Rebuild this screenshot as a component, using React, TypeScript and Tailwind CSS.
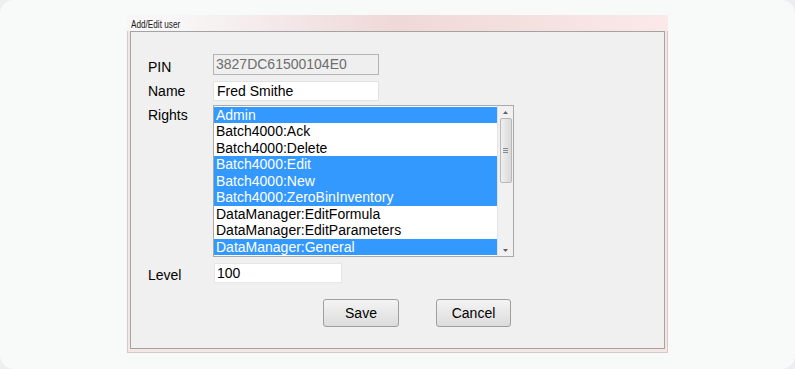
const rights = [
  { name: "Admin", selected: true },
  { name: "Batch4000:Ack", selected: false },
  { name: "Batch4000:Delete", selected: false },
  { name: "Batch4000:Edit", selected: true },
  { name: "Batch4000:New", selected: true },
  { name: "Batch4000:ZeroBinInventory", selected: true },
  { name: "DataManager:EditFormula", selected: false },
  { name: "DataManager:EditParameters", selected: false },
  { name: "DataManager:General", selected: true },
];

function Scrollbar() {
  return (
    <div className="flex h-full w-[16px] flex-col items-center border-l border-[#e3e3e3] bg-[#f1f1f1]">
      <div className="flex h-[12px] w-full items-center justify-center">
        <svg width="5" height="3" viewBox="0 0 5 3">
          <path d="M0 3 L2.5 0 L5 3 Z" fill="#606060" />
        </svg>
      </div>
      <div className="flex h-[65px] w-[12px] flex-col items-center justify-center gap-[1px] rounded-[2px] border border-[#b8b8b8] bg-gradient-to-r from-[#f0f0f0] to-[#d9d9d9]">
        <div className="h-px w-[5px] bg-[#8a8a8a]" />
        <div className="h-px w-[5px] bg-[#8a8a8a]" />
        <div className="h-px w-[5px] bg-[#8a8a8a]" />
      </div>
      <div className="flex-1" />
      <div className="flex h-[12px] w-full items-center justify-center">
        <svg width="5" height="3" viewBox="0 0 5 3">
          <path d="M0 0 L2.5 3 L5 0 Z" fill="#606060" />
        </svg>
      </div>
    </div>
  );
}

export default function App() {
  return (
    <div className="h-[369px] w-[795px] bg-[#eceef0] font-['Liberation_Sans',Arial,sans-serif]">
      <div className="h-full w-full overflow-hidden rounded-[14px] bg-[#f8f9f9] pl-[127px] pt-[15px]">
        <div className="flex w-[541px] flex-col">
          {/* title bar */}
          <div className="flex h-[16px] items-end bg-gradient-to-r from-[#f8f6f6] from-10% via-[#efd8d8] to-[#fbe9e9] pb-[2px] pl-[4px]">
            <span className="origin-left scale-x-[0.78] text-[10.5px] leading-none text-[#1a1a1a]">
              Add/Edit user
            </span>
          </div>
          {/* frame */}
          <div className="border-x border-b border-[#d9c6c6] bg-[#f6e7e7] px-[2px] pb-[3px]">
            <div className="h-[318px] border border-[#a3a3a3] bg-[#f0f0f0] pl-[17px] pt-[22px] text-[14px] text-black">
              <div className="flex h-[21px] items-center">
                <span className="w-[65px] pt-[5px]">PIN</span>
                <div className="flex h-[21px] w-[166px] items-center border border-[#b5b5b5] bg-[#efefef] pl-[2px] text-[#6d6d6d]">
                  3827DC61500104E0
                </div>
              </div>
              <div className="mt-[6px] flex h-[20px] items-center">
                <span className="w-[65px]">Name</span>
                <div className="flex h-[20px] w-[166px] items-center border border-[#e2e2e2] bg-white pl-[3px]">
                  Fred Smithe
                </div>
              </div>
              <div className="mt-[4px] flex h-[152px]">
                <span className="w-[65px] pt-[2px] leading-[16px]">Rights</span>
                <div className="flex h-[152px] w-[301px] border border-[#a9a9a9] bg-white">
                  <ul className="flex-1 pt-[1px]">
                    {rights.map((r) => (
                      <li
                        key={r.name}
                        className={
                          r.selected
                            ? "h-[16.45px] bg-[#3399ff] pl-[2px] leading-[16.45px] text-white"
                            : "h-[16.45px] pl-[2px] leading-[16.45px] text-black"
                        }
                      >
                        {r.name}
                      </li>
                    ))}
                  </ul>
                  <Scrollbar />
                </div>
              </div>
              <div className="mt-[6px] flex h-[20px] items-center">
                <span className="w-[66px] pt-[4px]">Level</span>
                <div className="flex h-[20px] w-[128px] items-center border border-[#e6e6e6] bg-white pl-[2px]">
                  100
                </div>
              </div>
              <div className="mt-[16px] flex pl-[175px]">
                <button className="h-[28px] w-[76px] rounded-[3px] border border-[#9f9f9f] bg-gradient-to-b from-[#f4f4f4] to-[#dcdcdc] text-[14px] text-black">
                  Save
                </button>
                <button className="ml-[37px] h-[28px] w-[75px] rounded-[3px] border border-[#9f9f9f] bg-gradient-to-b from-[#f4f4f4] to-[#dcdcdc] text-[14px] text-black">
                  Cancel
                </button>
              </div>
            </div>
          </div>
        </div>
      </div>
    </div>
  );
}
